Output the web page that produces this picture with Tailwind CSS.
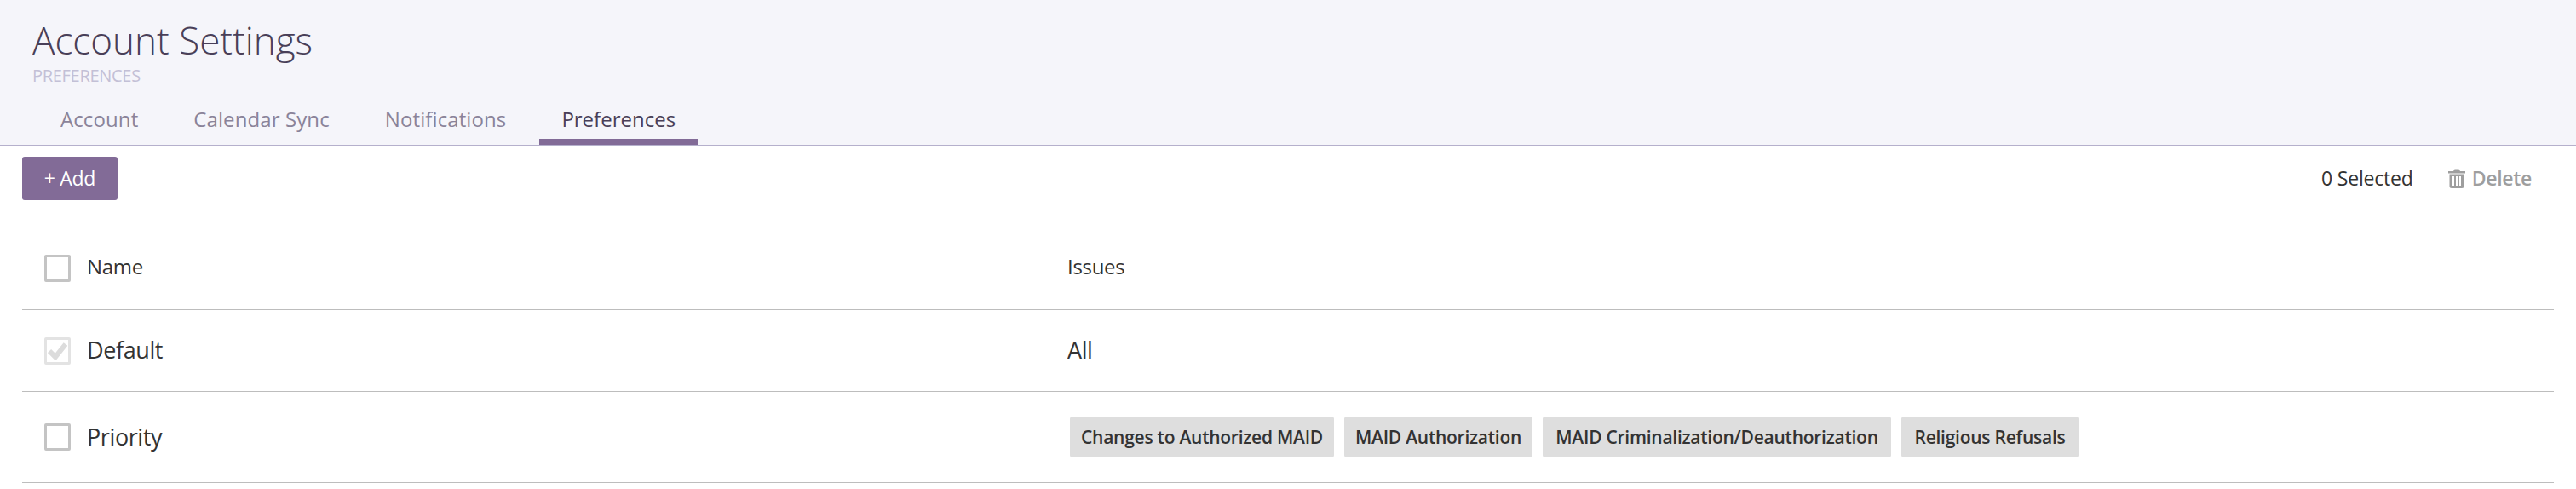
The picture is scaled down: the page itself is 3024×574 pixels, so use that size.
<!DOCTYPE html>
<html lang="en">
<head>
  <meta charset="UTF-8"/>
  <title>Account Settings</title>
  <script src="https://cdn.jsdelivr.net/npm/@tailwindcss/browser@4"></script>
</head>
<body class="bg-white font-['Open_Sans',sans-serif] text-[#333] overflow-hidden">
  <!-- Header -->
  <div class="h-[171px] bg-[#f5f5fa] border-b border-[#b5b0cc] pl-[38px] flex flex-col">
    <h1 class="mt-[20px] h-[54px] leading-[54px] text-[44px] font-light text-[#493f58]">Account Settings</h1>
    <div class="mt-[3px] h-[24px] leading-[24px] text-[20px] tracking-[-0.3px] text-[#c3c0d6]">PREFERENCES</div>
    <div class="mt-auto ml-[7px] flex gap-[13px] text-[24px] tracking-[0.1px] text-[#8a8399]">
      <a class="px-[26px] h-[49px] leading-[38px]">Account</a>
      <a class="px-[26px] h-[49px] leading-[38px]">Calendar Sync</a>
      <a class="px-[26px] h-[49px] leading-[38px]">Notifications</a>
      <a class="px-[26px] h-[49px] leading-[38px] tracking-normal text-[#493f58] font-medium border-b-[7px] border-[#826b97]">Preferences</a>
    </div>
  </div>

  <!-- Toolbar -->
  <div class="h-[64px] pt-[13px] px-[26px] flex items-start justify-between">
    <button class="w-[112px] h-[51px] bg-[#826b97] text-white text-[23px] rounded-[3px] tracking-[-0.3px]">+ Add</button>
    <div class="flex items-center h-[51px] pr-[26px] text-[23px] tracking-[-0.2px]">
      <span class="text-[#333]">0 Selected</span>
      <span class="ml-[41px] flex items-center gap-[8px] text-[#9e9e9e] font-semibold tracking-[-0.3px]">
        <svg width="20" height="23" viewBox="0 0 20 23" fill="#9e9e9e"><path d="M6 3 7.500.5h5L14 3h6v2.500H0V3zM1.500 6.500h17V20.500a2.500 2.500 0 0 1-2.500 2.500H4a2.500 2.500 0 0 1-2.500-2.500z"/><path fill="#fff" d="M5 9h2v11H5zM9 9h2v11H9zM13 9h2v11h-2z"/></svg>
        Delete
      </span>
    </div>
  </div>

  <!-- Table -->
  <div class="mx-[26px]">
    <div class="h-[129px] pt-[32px] border-b border-[#bdbdbd] flex items-center text-[24px] tracking-[-0.3px]">
      <div class="w-[1227px] flex items-center pl-[26px] gap-[19px]">
        <span class="w-[31px] h-[32px] border-[3px] border-[#c4c4c4] rounded-[2px]"></span>
        <span class="-mt-[5px]">Name</span>
      </div>
      <div class="-mt-[5px]">Issues</div>
    </div>
    <div class="h-[96px] border-b border-[#bdbdbd] flex items-center text-[27px] tracking-[-0.4px]">
      <div class="w-[1227px] flex items-center pl-[26px] gap-[19px]">
        <span class="w-[31px] h-[32px] border-[3px] border-[#e3e3e3] rounded-[2px] flex items-center justify-center">
          <svg width="23" height="22" viewBox="0 0 23 22" fill="none" stroke="#dcdcdc" stroke-width="6"><path d="M2 11l7 7L21 3"/></svg>
        </span>
        <span>Default</span>
      </div>
      <div>All</div>
    </div>
    <div class="h-[107px] border-b border-[#bdbdbd] flex items-center">
      <div class="w-[1227px] flex items-center pl-[26px] gap-[19px] text-[27px] tracking-[-0.4px]">
        <span class="w-[31px] h-[32px] border-[3px] border-[#c4c4c4] rounded-[2px]"></span>
        <span>Priority</span>
      </div>
      <div class="flex gap-[12px] pl-[3px] text-[21px] font-semibold tracking-[-0.25px] text-[#333] text-center">
        <span class="w-[310px] h-[48px] leading-[48px] bg-[#dedede] rounded-[3px]">Changes to Authorized MAID</span>
        <span class="w-[221px] h-[48px] leading-[48px] bg-[#dedede] rounded-[3px]">MAID Authorization</span>
        <span class="w-[409px] h-[48px] leading-[48px] bg-[#dedede] rounded-[3px]">MAID Criminalization/Deauthorization</span>
        <span class="w-[208px] h-[48px] leading-[48px] bg-[#dedede] rounded-[3px]">Religious Refusals</span>
      </div>
    </div>
  </div>
</body>
</html>
